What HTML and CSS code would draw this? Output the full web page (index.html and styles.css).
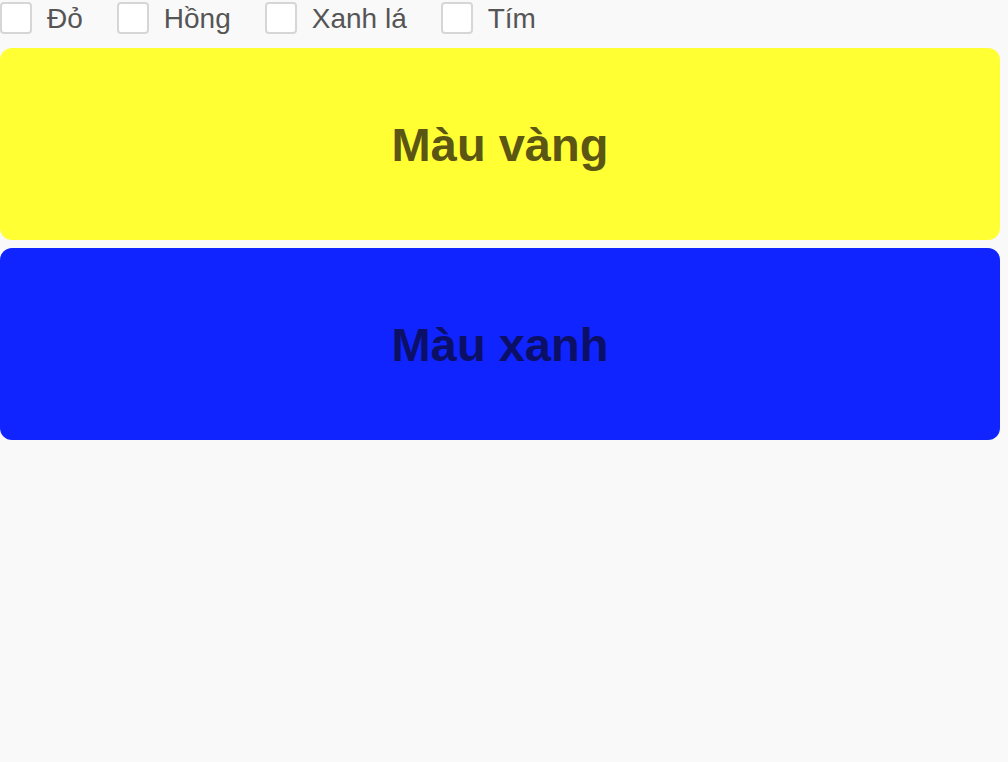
FILE: index.html
```html
<!DOCTYPE html>
<html lang="vi">
<head>
<meta charset="utf-8">
<link rel="stylesheet" href="styles.css">
</head>
<body>
<div class="filters">
  <label class="opt"><span class="box"></span><span class="txt">Đỏ</span></label>
  <label class="opt"><span class="box"></span><span class="txt">Hồng</span></label>
  <label class="opt"><span class="box"></span><span class="txt">Xanh lá</span></label>
  <label class="opt"><span class="box"></span><span class="txt">Tím</span></label>
</div>
<div class="cards">
  <div class="card yellow">Màu vàng</div>
  <div class="card blue">Màu xanh</div>
</div>
</body>
</html>
```
FILE: styles.css
```css
html, body {
  margin: 0;
  padding: 0;
  background: #f9f9f9;
  font-family: "Liberation Sans", Arial, sans-serif;
}
.filters {
  display: flex;
  align-items: center;
  height: 36px;
}
.opt {
  display: flex;
  align-items: center;
  margin-right: 34px;
}
.box {
  width: 32px;
  height: 32px;
  box-sizing: border-box;
  border: 2px solid #d6d6d6;
  border-radius: 4px;
  background: #fff;
  margin-right: 15px;
}
.txt {
  font-size: 28px;
  line-height: 32px;
  padding-top: 2px;
  color: #555;
}
.cards {
  margin-top: 12px;
  width: 1000px;
  display: flex;
  flex-direction: column;
  gap: 8px;
}
.card {
  height: 192px;
  box-sizing: border-box;
  padding-top: 1px;
  border-radius: 12px;
  display: flex;
  align-items: center;
  justify-content: center;
  font-size: 47px;
  font-weight: bold;
}
.yellow {
  background: #ffff33;
  color: #5c5615;
}
.blue {
  background: #0f24ff;
  color: #0b1066;
}
```
